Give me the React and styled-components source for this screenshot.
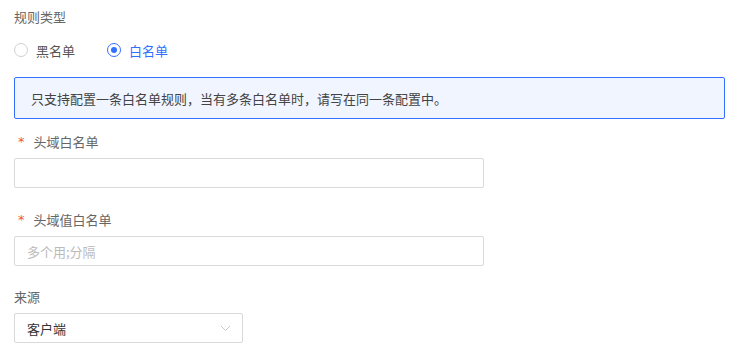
import React from "react";
import styled, { createGlobalStyle } from "styled-components";

const Global = createGlobalStyle`
  html, body { margin: 0; padding: 0; background: #fff; }
  body { font-family: "Noto Sans CJK SC", "Noto Sans", sans-serif; }
  * { box-sizing: border-box; }
`;

const Form = styled.div`
  padding: 7px 15px 0 14px;
  width: 740px;
  display: flex;
  flex-direction: column;
`;

const Label = styled.div`
  font-size: 13px;
  line-height: 20px;
  height: 20px;
  color: #666;
  display: flex;
  align-items: center;
  margin-top: ${(p) => p.$mt || 0}px;
  margin-bottom: 6px;
`;

const Star = styled.span`
  color: #f5543d;
  font-size: 13px;
  margin: 0 9px 0 4px;
  font-family: "DejaVu Sans", sans-serif;
`;

const RadioRow = styled.div`
  display: flex;
  align-items: center;
  gap: 32px;
  margin-top: 7px;
  height: 20px;
`;

const RadioItem = styled.label`
  display: flex;
  align-items: center;
  gap: 8px;
  font-size: 13px;
  color: ${(p) => (p.$checked ? "#3370ff" : "#555")};
`;

const Circle = styled.span`
  width: 14px;
  height: 14px;
  border-radius: 50%;
  border: 1px solid ${(p) => (p.$checked ? "#3370ff" : "#d0d0d0")};
  display: inline-flex;
  align-items: center;
  justify-content: center;
  &::after {
    content: "";
    width: 6px;
    height: 6px;
    border-radius: 50%;
    background: #3370ff;
    display: ${(p) => (p.$checked ? "block" : "none")};
  }
`;

const Alert = styled.div`
  margin-top: 17px;
  height: 42px;
  width: 711px;
  border: 1px solid #3370ff;
  border-radius: 2px;
  background: #f0f5ff;
  color: #444;
  font-size: 13px;
  display: flex;
  align-items: center;
  padding-left: 16px;
`;

const Input = styled.div`
  width: ${(p) => p.$w}px;
  height: 30px;
  border: 1px solid #d9d9d9;
  border-radius: 2px;
  display: flex;
  align-items: center;
  justify-content: space-between;
  padding: 0 11px 0 12px;
  font-size: 13px;
  color: ${(p) => (p.$placeholder ? "#bbb" : "#333")};
`;

const Chevron = styled.svg`
  width: 11px;
  height: 7px;
`;

export default function App() {
  return (
    <>
      <Global />
      <Form>
        <Label>规则类型</Label>
        <RadioRow>
          <RadioItem>
            <Circle />
            黑名单
          </RadioItem>
          <RadioItem $checked>
            <Circle $checked />
            白名单
          </RadioItem>
        </RadioRow>
        <Alert>只支持配置一条白名单规则，当有多条白名单时，请写在同一条配置中。</Alert>
        <Label $mt={13}>
          <Star>*</Star>头域白名单
        </Label>
        <Input $w={470} />
        <Label $mt={22}>
          <Star>*</Star>头域值白名单
        </Label>
        <Input $w={470} $placeholder>
          多个用;分隔
        </Input>
        <Label $mt={21}>来源</Label>
        <Input $w={229}>
          客户端
          <Chevron viewBox="0 0 11 7">
            <path d="M1 1 L5.5 5.5 L10 1" fill="none" stroke="#c8c8c8" strokeWidth="1" />
          </Chevron>
        </Input>
      </Form>
    </>
  );
}
